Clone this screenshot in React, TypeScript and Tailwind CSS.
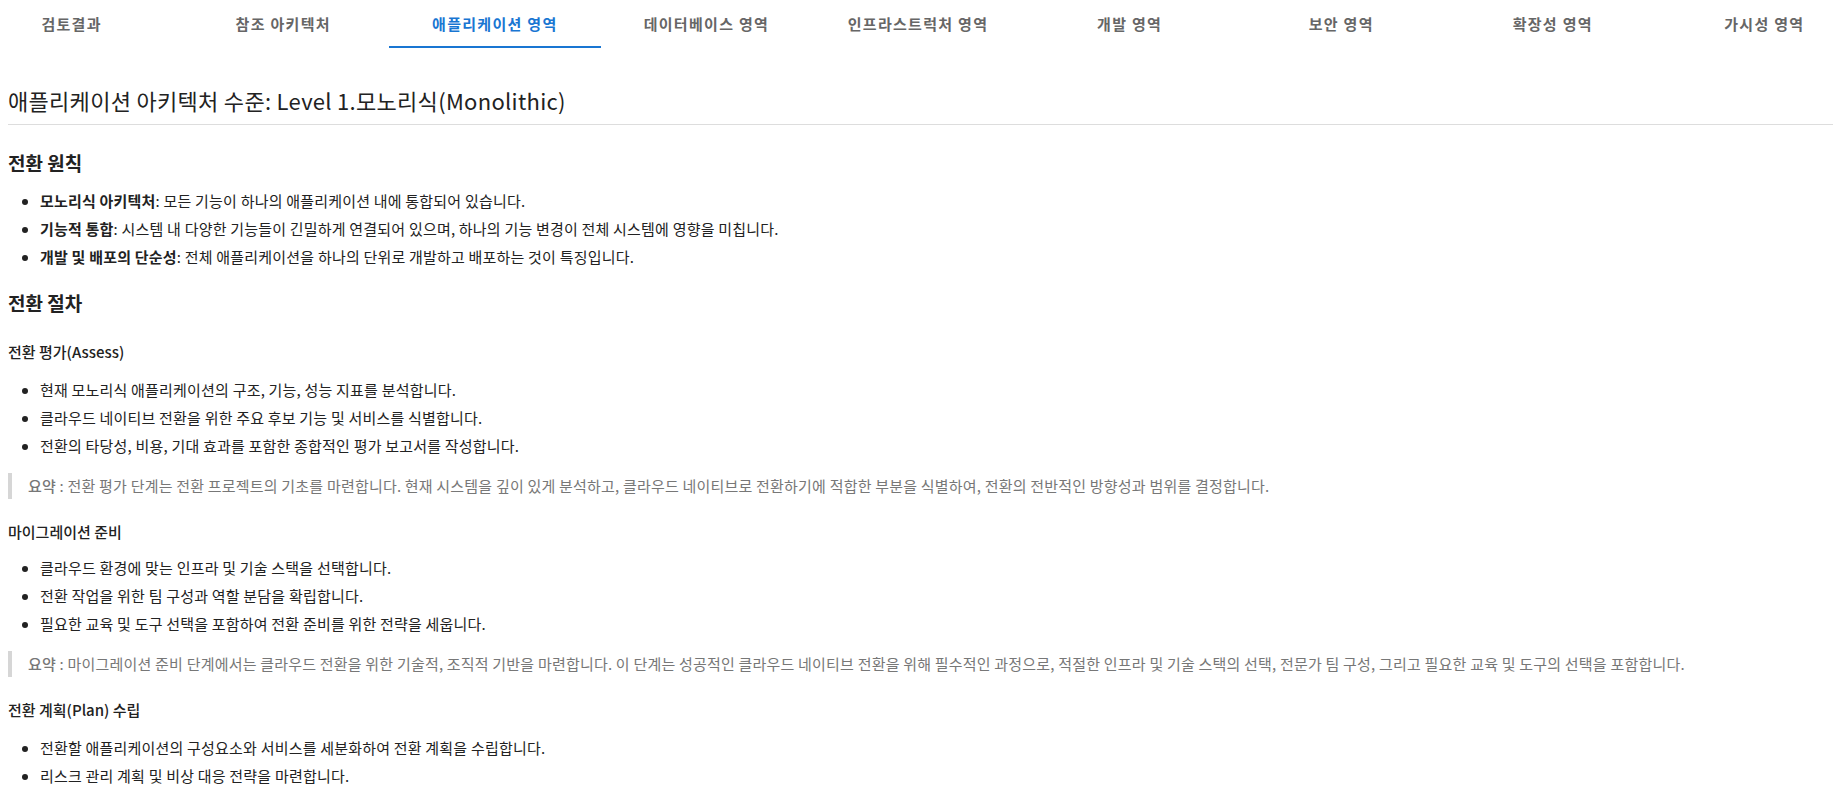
const tabs = [
  "검토결과",
  "참조 아키텍처",
  "애플리케이션 영역",
  "데이터베이스 영역",
  "인프라스트럭처 영역",
  "개발 영역",
  "보안 영역",
  "확장성 영역",
  "가시성 영역",
]

const Bullets = ({ items, top = "mt-[13px]" }: { items: React.ReactNode[]; top?: string }) => (
  <ul className={`list-disc pl-8 ${top} mb-[13px] text-[15px] leading-[28px] tracking-[0.2px] text-[#222]`}>
    {items.map((item, i) => (
      <li key={i}>{item}</li>
    ))}
  </ul>
)

const Summary = ({ children }: { children: React.ReactNode }) => (
  <blockquote className="my-[13px] border-l-4 border-[#d6d6d6] pl-4 text-[15px] leading-[26px] tracking-[0.2px] text-[#777]">
    <span className="font-medium">요약</span> : {children}
  </blockquote>
)

const App = () => {
  return (
    <div className="min-h-screen bg-white font-['Noto_Sans_CJK_KR',sans-serif]">
      <nav className="flex h-12 justify-center overflow-hidden">
        {tabs.map((tab) => {
          const active = tab === "애플리케이션 영역"
          return (
            <div
              key={tab}
              className={
                active
                  ? "flex w-[211.6px] shrink-0 items-center justify-center border-b-2 border-[#1976d2] pt-[2px] text-[15px] font-semibold tracking-[1.3px] text-[#1976d2]"
                  : "flex w-[211.6px] shrink-0 items-center justify-center text-[15px] font-semibold tracking-[1.3px] text-[#666]"
              }
            >
              {tab}
            </div>
          )
        })}
      </nav>

      <div className="pl-2 pr-[3px]">
        <h1 className="mt-[36px] border-b border-[#ddd] pb-[7px] text-[22px] leading-[33px] tracking-[0.3px] text-[#222]">
          애플리케이션 아키텍처 수준: Level 1.모노리식(Monolithic)
        </h1>

        <h2 className="mt-[24px] text-[19px] font-semibold leading-[27px] text-[#222]">전환 원칙</h2>
        <Bullets
          top="mt-[11px]"
          items={[
            <>
              <b className="font-semibold">모노리식 아키텍처</b>: 모든 기능이 하나의 애플리케이션 내에 통합되어 있습니다.
            </>,
            <>
              <b className="font-semibold">기능적 통합</b>: 시스템 내 다양한 기능들이 긴밀하게 연결되어 있으며, 하나의 기능 변경이 전체 시스템에 영향을 미칩니다.
            </>,
            <>
              <b className="font-semibold">개발 및 배포의 단순성</b>: 전체 애플리케이션을 하나의 단위로 개발하고 배포하는 것이 특징입니다.
            </>,
          ]}
        />

        <h2 className="mt-[18px] text-[19px] font-semibold leading-[27px] text-[#222]">전환 절차</h2>

        <h3 className="mt-[25px] text-[15px] font-medium leading-[22px] text-[#222]">전환 평가(Assess)</h3>
        <Bullets
          items={[
            "현재 모노리식 애플리케이션의 구조, 기능, 성능 지표를 분석합니다.",
            "클라우드 네이티브 전환을 위한 주요 후보 기능 및 서비스를 식별합니다.",
            "전환의 타당성, 비용, 기대 효과를 포함한 종합적인 평가 보고서를 작성합니다.",
          ]}
        />
        <Summary>
          전환 평가 단계는 전환 프로젝트의 기초를 마련합니다. 현재 시스템을 깊이 있게 분석하고, 클라우드 네이티브로 전환하기에 적합한 부분을 식별하여, 전환의 전반적인 방향성과 범위를 결정합니다.
        </Summary>

        <h3 className="mt-[22px] text-[15px] font-medium leading-[22px] text-[#222]">마이그레이션 준비</h3>
        <Bullets
          top="mt-[11px]"
          items={[
            "클라우드 환경에 맞는 인프라 및 기술 스택을 선택합니다.",
            "전환 작업을 위한 팀 구성과 역할 분담을 확립합니다.",
            "필요한 교육 및 도구 선택을 포함하여 전환 준비를 위한 전략을 세웁니다.",
          ]}
        />
        <Summary>
          마이그레이션 준비 단계에서는 클라우드 전환을 위한 기술적, 조직적 기반을 마련합니다. 이 단계는 성공적인 클라우드 네이티브 전환을 위해 필수적인 과정으로, 적절한 인프라 및 기술 스택의 선택, 전문가 팀 구성, 그리고 필요한 교육 및 도구의 선택을 포함합니다.
        </Summary>

        <h3 className="mt-[22px] text-[15px] font-medium leading-[22px] text-[#222]">전환 계획(Plan) 수립</h3>
        <Bullets
          items={[
            "전환할 애플리케이션의 구성요소와 서비스를 세분화하여 전환 계획을 수립합니다.",
            "리스크 관리 계획 및 비상 대응 전략을 마련합니다.",
          ]}
        />
      </div>
    </div>
  )
}

export default App
